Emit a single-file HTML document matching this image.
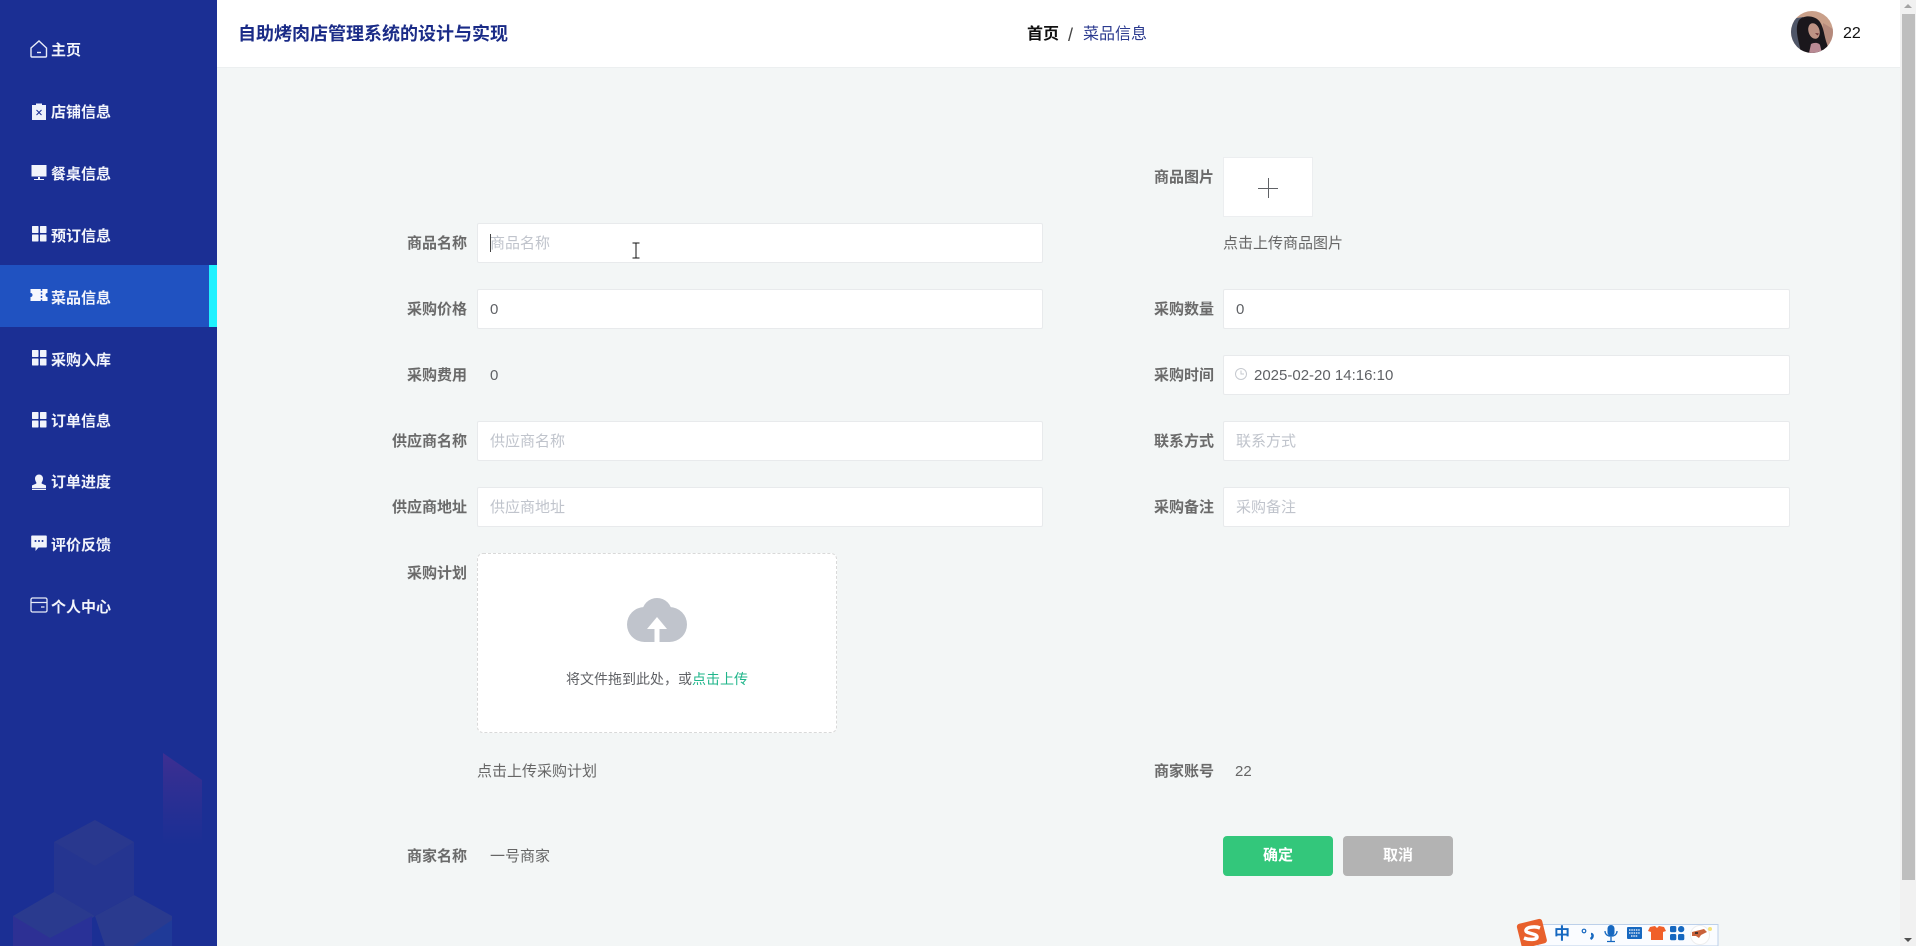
<!DOCTYPE html>
<html lang="zh"><head><meta charset="utf-8"><title>菜品信息</title>
<style>
*{box-sizing:border-box}
html,body{margin:0;padding:0;width:1916px;height:946px;overflow:hidden;background:#f3f6f6;font-family:"Liberation Sans","Noto Sans CJK SC",sans-serif;font-size:15px;color:#666}
.a{position:absolute}
#side{left:0;top:0;width:217px;height:946px;background:#1b2f94;overflow:hidden}
.m{position:absolute;left:0;width:217px;height:62px;line-height:65px;padding-left:51px;color:#f2f4fb;font-weight:700;font-size:15px;white-space:nowrap}
.m svg{position:absolute;left:30px;top:21px;width:18px;height:18px}
.on{background:#2052c1;border-right:8px solid #1ff1ff}
#top{left:217px;top:0;width:1683px;height:68px;background:#fff;border-bottom:1px solid #eceff0}
.l{position:absolute;width:100px;text-align:right;height:40px;line-height:42px;font-weight:700;color:#6a6a6a;white-space:nowrap}
.l.L{left:367px}.l.R{left:1114px}
.i{position:absolute;height:40px;line-height:39px;background:#fff;border:1px solid #e8eaec;border-radius:2px;padding-left:12px;color:#606266;white-space:nowrap}
.i.L{left:477px;width:566px}.i.R{left:1223px;width:567px}
.p{color:#c0c4cc}
.t{position:absolute;height:40px;line-height:42px;white-space:nowrap;color:#666}
.b{position:absolute;top:836px;width:110px;height:40px;line-height:40px;border-radius:4px;color:#fff;text-align:center;font-weight:700;font-size:15px}
</style></head><body>

<div id="side" class="a">
<svg class="a" style="left:0;top:720px" width="217" height="226" viewBox="0 0 217 226">
<defs><linearGradient id="g1" x1="0" y1="0" x2="0" y2="1"><stop offset="0" stop-color="#5a2f90" stop-opacity=".55"/><stop offset="1" stop-color="#4a2f90" stop-opacity="0"/></linearGradient></defs>
<polygon points="163,33 202,60 202,125 163,125" fill="url(#g1)"/>
<polygon points="95,100 134,122 134,175 95,196 54,175 54,122" fill="#253590"/>
<polygon points="95,100 134,122 95,146 54,122" fill="#29388e"/>
<polygon points="54,172 95,196 50,226 13,226 13,196" fill="#2a3a8e"/>
<polygon points="134,175 172,196 172,226 105,226 95,196" fill="#2a3a8e"/>
<polygon points="13,196 50,218 50,226 13,226" fill="#2d3094"/>
<polygon points="50,218 92,196 92,226 50,226" fill="#293197"/>
<polygon points="133,226 172,200 172,226" fill="#1f3a98"/>
</svg>
</div>

<div class="m" style="top:19px;line-height:63px"><svg viewBox="0 0 18 18" fill="none" stroke="#e8ecf8" stroke-width="1.4"><path d="M1 8 9 1l7.500 7v8a1 1 0 0 1-1 1H2a1 1 0 0 1-1-1z"/><path d="M7 12.500h4"/></svg>主页</div>
<div class="m" style="top:81px;line-height:63px"><svg viewBox="0 0 18 18"><path d="M2 3h4V1.500h6V3h4v15H2z" fill="#eef1fb"/><path d="M6.500 8 11.500 13M11.500 8l-5 5" stroke="#1b2f94" stroke-width="1"/></svg>店铺信息</div>
<div class="m" style="top:143px;line-height:63px"><svg viewBox="0 0 18 18"><path d="M1.500 1h15v11.500h-15z" fill="#f2f4fb"/><path d="M8 13h2v2h4v1H4v-1h4z" fill="#f2f4fb"/></svg>餐桌信息</div>
<div class="m" style="top:204px"><svg viewBox="0 0 18 18" fill="#f2f4fb"><rect x="2" y="1" width="6.500" height="7" rx=".6"/><rect x="10" y="1" width="6.500" height="7" rx=".6"/><rect x="2" y="9.500" width="6.500" height="7" rx=".6"/><rect x="10" y="9.500" width="6.500" height="7" rx=".6"/></svg>预订信息</div>
<div class="m on" style="top:265px;line-height:68px"><svg viewBox="0 0 18 18"><path d="M.5 3h17v4a2 2 0 0 0 0 4v4H.5v-4a2 2 0 0 0 0-4z" fill="#f6f8fe"/><path d="M11.500 3v12" stroke="#2052c1" stroke-width="1.500" stroke-dasharray="2 1.500"/></svg>菜品信息</div>
<div class="m" style="top:328px"><svg viewBox="0 0 18 18" fill="#f2f4fb"><rect x="2" y="1" width="6.500" height="7" rx=".6"/><rect x="10" y="1" width="6.500" height="7" rx=".6"/><rect x="2" y="9.500" width="6.500" height="7" rx=".6"/><rect x="10" y="9.500" width="6.500" height="7" rx=".6"/></svg>采购入库</div>
<div class="m" style="top:390px;line-height:63px"><svg viewBox="0 0 18 18" fill="#f2f4fb"><rect x="2" y="1" width="6.500" height="7" rx=".6"/><rect x="10" y="1" width="6.500" height="7" rx=".6"/><rect x="2" y="9.500" width="6.500" height="7" rx=".6"/><rect x="10" y="9.500" width="6.500" height="7" rx=".6"/></svg>订单信息</div>
<div class="m" style="top:452px;line-height:62px"><svg viewBox="0 0 18 18" fill="#f2f4fb"><path d="M9 1.500a4 4 0 0 1 4 4c0 2-1 3-1.500 4.500 0 1 3 1.500 4.500 2.500v2.500H2v-2.500c1.500-1 4.500-1.500 4.500-2.500C6 8.500 5 7.500 5 5.500a4 4 0 0 1 4-4z"/><rect x="2" y="15.700" width="14" height="1.300"/></svg>订单进度</div>
<div class="m" style="top:513px"><svg viewBox="0 0 18 18"><path d="M2 1.500h14a.8.8 0 0 1 .8.8v10.400a.8.8 0 0 1-.8.8H8.500L5.500 17v-3.500H2a.8.8 0 0 1-.8-.8V2.300A.8.8 0 0 1 2 1.500z" fill="#f2f4fb"/><circle cx="5.500" cy="7" r="1" fill="#1b2f94"/><circle cx="9" cy="7" r="1" fill="#1b2f94"/><circle cx="12.500" cy="7" r="1" fill="#1b2f94"/></svg>评价反馈</div>
<div class="m" style="top:575px"><svg viewBox="0 0 18 18" fill="none" stroke="#e8ecf8" stroke-width="1.300"><rect x="1" y="2" width="16" height="14" rx="1.500"/><path d="M1 6.500h16M11 11h3.500"/></svg>个人中心</div>

<div id="top" class="a"></div>
<div class="t" style="left:238px;top:13px;font-size:18px;font-weight:700;color:#1a2b87">自助烤肉店管理系统的设计与实现</div>
<div class="t" style="left:1027px;top:14px;font-size:16px;font-weight:700;color:#111">首页</div>
<div class="t" style="left:1068px;top:14px;font-size:18px;color:#444">/</div>
<div class="t" style="left:1083px;top:14px;font-size:16px;color:#2b3a8f">菜品信息</div>

<svg class="a" style="left:1791px;top:11px" width="42" height="42" viewBox="0 0 42 42">
<defs><clipPath id="c"><circle cx="21" cy="21" r="21"/></clipPath></defs>
<g clip-path="url(#c)">
<rect width="42" height="42" fill="#c9a08a"/>
<path d="M0 8 12 6v36H0z" fill="#4f5668"/>
<path d="M32 12 42 18v24H32z" fill="#b58a7c"/>
<path d="M8 9C14 3 25 5 29 11c4 6 4 14 7 22l3 9H10C8 30 3 18 8 9z" fill="#1a171c"/>
<ellipse cx="23" cy="20" rx="5.500" ry="8" fill="#bd9284" transform="rotate(-18 23 20)"/>
<path d="M20 33c4-2 8-1 9 1l2 8H18z" fill="#b98a94"/>
<path d="M24 22l4 .5-1.500 2z" fill="#6e3436"/>
</g></svg>
<div class="t" style="left:1843px;top:13px;font-size:16px;color:#111">22</div>

<div class="l R" style="top:157px">商品图片</div>
<div class="a" style="left:1223px;top:157px;width:90px;height:60px;background:#fff;border:1px solid #eceef0"></div>
<div class="a" style="left:1258px;top:187.500px;width:20px;height:1.500px;background:#606266"></div>
<div class="a" style="left:1267.500px;top:178px;width:1.500px;height:20px;background:#606266"></div>
<div class="t" style="left:1223px;top:223px">点击上传商品图片</div>

<div class="l L" style="top:223px">商品名称</div>
<div class="i L p" style="top:223px">商品名称</div>
<div class="a" style="left:490px;top:234px;width:1px;height:18px;background:#444"></div>

<div class="l L" style="top:289px">采购价格</div>
<div class="i L" style="top:289px">0</div>
<div class="l R" style="top:289px">采购数量</div>
<div class="i R" style="top:289px">0</div>

<div class="l L" style="top:355px">采购费用</div>
<div class="t" style="left:490px;top:355px;color:#606266">0</div>
<div class="l R" style="top:355px">采购时间</div>
<div class="i R" style="top:355px;padding-left:30px">2025-02-20 14:16:10</div>
<svg class="a" style="left:1234px;top:367px" width="14" height="14" viewBox="0 0 14 14" fill="none" stroke="#c6c9cf" stroke-width="1"><circle cx="7" cy="7" r="5.500"/><path d="M7 3.500V7h3"/></svg>

<div class="l L" style="top:421px">供应商名称</div>
<div class="i L p" style="top:421px">供应商名称</div>
<div class="l R" style="top:421px">联系方式</div>
<div class="i R p" style="top:421px">联系方式</div>

<div class="l L" style="top:487px">供应商地址</div>
<div class="i L p" style="top:487px">供应商地址</div>
<div class="l R" style="top:487px">采购备注</div>
<div class="i R p" style="top:487px">采购备注</div>

<div class="l L" style="top:553px">采购计划</div>
<div class="a" style="left:477px;top:553px;width:360px;height:180px;background:#fff;border:1px dashed #d9d9d9;border-radius:6px"></div>
<svg class="a" style="left:620px;top:590px" width="75" height="60" viewBox="620 590 75 60">
<circle cx="644.500" cy="624.500" r="17.500" fill="#c0c4cc"/><circle cx="669.500" cy="624.500" r="17.500" fill="#c0c4cc"/><circle cx="657" cy="613" r="15" fill="#c0c4cc"/><rect x="644" y="615" width="26" height="27" fill="#c0c4cc"/>
<polygon points="657,617 667,629 647,629" fill="#fff"/><rect x="654.500" y="628" width="5" height="14" fill="#fff"/>
</svg>
<div class="t" style="left:566px;top:658px;font-size:14px;color:#606266">将文件拖到此处，或<span style="color:#1fb58a">点击上传</span></div>

<div class="t" style="left:477px;top:751px">点击上传采购计划</div>
<div class="l R" style="top:751px">商家账号</div>
<div class="t" style="left:1235px;top:751px">22</div>

<div class="l L" style="top:836px">商家名称</div>
<div class="t" style="left:490px;top:836px">一号商家</div>
<div class="b" style="left:1223px;background:#33c77b">确定</div>
<div class="b" style="left:1343px;background:#b3b3b3">取消</div>

<svg class="a" style="left:631px;top:242px" width="10" height="18" viewBox="0 0 10 18" fill="none" stroke="#111" stroke-width="1"><path d="M1.500 1h7M5 1v15M1.500 16h7"/></svg>

<svg class="a" style="left:1510px;top:915px" width="215" height="31" viewBox="0 0 215 31">
<path d="M28 9.500H208V31H28z" fill="#fafcff" stroke="#bcd0ea" stroke-width="1"/>
<rect x="9" y="6" width="26" height="25" rx="3" fill="#e8602c" transform="rotate(-14 22 19)"/>
<path d="M30 13c-5-2-13-1-14 2-1 4 11 3 11 7 0 3-8 3-13 1" fill="none" stroke="#fff" stroke-width="3.500"/>
<text x="44" y="24" font-family="Noto Sans CJK SC,sans-serif" font-size="16" font-weight="700" fill="#1668c0">中</text>
<circle cx="74" cy="16" r="1.800" fill="none" stroke="#1668c0" stroke-width="1.200"/>
<path d="M81 19c2.500 0 2 3.500-.5 5" fill="none" stroke="#1668c0" stroke-width="2.400"/>
<rect x="97.500" y="10" width="7" height="11" rx="3.500" fill="#1668c0"/>
<path d="M95 16c0 7 12 7 12 0M101 22v4M97 26.500h8" fill="none" stroke="#1668c0" stroke-width="1.300"/>
<rect x="117" y="12" width="15" height="12" rx="1" fill="#1668c0"/>
<path d="M119 15h11M119 18h11M121 21h7" stroke="#fff" stroke-width="1.300" stroke-dasharray="1.500 .8"/>
<path d="M140 12l5-1 2 2 2-2 5 1 2 4-3 1v8h-12v-8l-3-1z" fill="#f0602a"/>
<rect x="160" y="11" width="6.300" height="6.300" rx="1.500" fill="#1668c0"/><rect x="168" y="11" width="6.300" height="6.300" rx="3" fill="#1668c0"/><rect x="160" y="19" width="6.300" height="6.300" rx="1.500" fill="#1668c0"/><rect x="168" y="19" width="6.300" height="6.300" rx="1.500" fill="#1668c0"/>
<circle cx="190" cy="20" r="9.500" fill="#fff" stroke="#eee"/>
<path d="M182 17l12-3 3 3-6 3-2 3-3-2h-4z" fill="#c9623a"/><path d="M185 18h3" stroke="#222" stroke-width="1.500"/><circle cx="200" cy="14" r="2" fill="#f5e27a"/>
</svg>

<div class="a" style="left:1900px;top:0;width:16px;height:946px;background:#f1f1f1"></div>
<div class="a" style="left:1902px;top:14px;width:13px;height:866px;background:#bebebe"></div>
<div class="a" style="left:1904px;top:4px;width:0;height:0;border-left:4px solid transparent;border-right:4px solid transparent;border-bottom:4px solid #a3a3a3"></div>
<div class="a" style="left:1904px;top:938px;width:0;height:0;border-left:4px solid transparent;border-right:4px solid transparent;border-top:4px solid #505050"></div>
</body></html>
